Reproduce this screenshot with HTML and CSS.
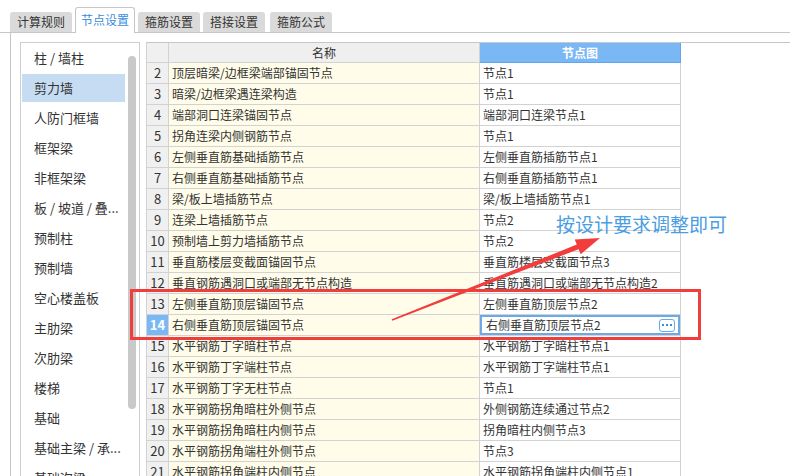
FILE: index.html
```html
<!DOCTYPE html>
<html lang="zh-CN">

  <head>
    <meta charset="UTF-8">
    <meta name="viewport" content="width=device-width, initial-scale=1.0">
    <title>节点设置</title>

    <link rel="stylesheet" href="styles.css">
  </head>

  <body>

    <div class="tabs">
      <div class="tab">计算规则</div>
      <div class="tab active">节点设置</div>
      <div class="tab">箍筋设置</div>
      <div class="tab">搭接设置</div>
      <div class="tab last">箍筋公式</div>
    </div>

    <div class="content">

      <div class="sidebar">
        <ul class="list">
          <li>柱 / 墙柱</li>
          <li class="selected">剪力墙</li>
          <li>人防门框墙</li>
          <li>框架梁</li>
          <li>非框架梁</li>
          <li>板 / 坡道 / 叠...</li>
          <li>预制柱</li>
          <li>预制墙</li>
          <li>空心楼盖板</li>
          <li>主肋梁</li>
          <li>次肋梁</li>
          <li>楼梯</li>
          <li>基础</li>
          <li>基础主梁 / 承...</li>
          <li>基础次梁</li>
        </ul>
        <div class="thumb"></div>
      </div>

      <div class="grid">
        <table>
          <thead>
            <tr>
              <th class="num"></th>
              <th class="name">名称</th>
              <th class="node">节点图</th>
            </tr>
          </thead>
          <tbody>
            <tr><td class="num">2</td><td class="name">顶层暗梁/边框梁端部锚固节点</td><td class="node">节点1</td></tr>
            <tr><td class="num">3</td><td class="name">暗梁/边框梁遇连梁构造</td><td class="node">节点1</td></tr>
            <tr><td class="num">4</td><td class="name">端部洞口连梁锚固节点</td><td class="node">端部洞口连梁节点1</td></tr>
            <tr><td class="num">5</td><td class="name">拐角连梁内侧钢筋节点</td><td class="node">节点1</td></tr>
            <tr><td class="num">6</td><td class="name">左侧垂直筋基础插筋节点</td><td class="node">左侧垂直筋插筋节点1</td></tr>
            <tr><td class="num">7</td><td class="name">右侧垂直筋基础插筋节点</td><td class="node">右侧垂直筋插筋节点1</td></tr>
            <tr><td class="num">8</td><td class="name">梁/板上墙插筋节点</td><td class="node">梁/板上墙插筋节点1</td></tr>
            <tr><td class="num">9</td><td class="name">连梁上墙插筋节点</td><td class="node">节点2</td></tr>
            <tr><td class="num">10</td><td class="name">预制墙上剪力墙插筋节点</td><td class="node">节点2</td></tr>
            <tr><td class="num">11</td><td class="name">垂直筋楼层变截面锚固节点</td><td class="node">垂直筋楼层变截面节点3</td></tr>
            <tr><td class="num">12</td><td class="name">垂直钢筋遇洞口或端部无节点构造</td><td class="node">垂直筋遇洞口或端部无节点构造2</td></tr>
            <tr><td class="num">13</td><td class="name">左侧垂直筋顶层锚固节点</td><td class="node">左侧垂直筋顶层节点2</td></tr>
            <tr class="current">
              <td class="num">14</td>
              <td class="name">右侧垂直筋顶层锚固节点</td>
              <td class="node">
                <div class="editor">
                  <span>右侧垂直筋顶层节点2</span>
                  <span class="more"><i></i><i></i><i></i></span>
                </div>
              </td>
            </tr>
            <tr><td class="num">15</td><td class="name">水平钢筋丁字暗柱节点</td><td class="node">水平钢筋丁字暗柱节点1</td></tr>
            <tr><td class="num">16</td><td class="name">水平钢筋丁字端柱节点</td><td class="node">水平钢筋丁字端柱节点1</td></tr>
            <tr><td class="num">17</td><td class="name">水平钢筋丁字无柱节点</td><td class="node">节点1</td></tr>
            <tr><td class="num">18</td><td class="name">水平钢筋拐角暗柱外侧节点</td><td class="node">外侧钢筋连续通过节点2</td></tr>
            <tr><td class="num">19</td><td class="name">水平钢筋拐角暗柱内侧节点</td><td class="node">拐角暗柱内侧节点3</td></tr>
            <tr><td class="num">20</td><td class="name">水平钢筋拐角端柱外侧节点</td><td class="node">节点3</td></tr>
            <tr><td class="num">21</td><td class="name">水平钢筋拐角端柱内侧节点</td><td class="node">水平钢筋拐角端柱内侧节点1</td></tr>
          </tbody>
        </table>
      </div>

    </div>

    <!-- annotation drawn over the screenshot -->
    <svg class="markup" width="790" height="476" viewBox="0 0 790 476">
      <rect x="131.5" y="290.5" width="568" height="48" fill="none" stroke="#f23d3d" stroke-width="3" />
      <polygon fill="#f23d3d"
        points="391.7,319.3 576.8,244.6 574.7,239.5 600,238 580.7,254.3 578.6,249.2 392.3,320.7" />
    </svg>
    <div class="note">按设计要求调整即可</div>

  </body>

</html>
```

FILE: styles.css
```css
* {
  margin: 0;
  padding: 0;
  box-sizing: border-box;
}

body {
  width: 790px;
  height: 476px;
  overflow: hidden;
  position: relative;
  background: #fff;
  color: #333;
  font-family: "Noto Sans CJK SC", "Noto Sans", sans-serif;
}

.tabs {
  display: flex;
  align-items: flex-end;
  gap: 3px;
  height: 33px;
  padding-left: 10px;
  border-bottom: 1px solid #c6c6c6;

  & .tab {
    height: 20px;
    line-height: 20px;
    padding: 0 7px;
    font-size: 12px;
    background: #dadada;
    border-radius: 3px 3px 0 0;
  }

  & .tab.active {
    height: 26px;
    line-height: 24px;
    padding: 0 5px;
    margin-bottom: -1px;
    background: #fff;
    color: #3a8ee0;
    border: 1px solid #c6c6c6;
    border-bottom: none;
  }

  & .tab.last {
    margin-left: 2px;
  }
}

.content {
  display: flex;
  gap: 6px;
  height: 443px;
  margin-left: 10px;
  padding: 9px 0 0 9px;
  border-left: 1px solid #c6c6c6;
  overflow: hidden;
}

.sidebar {
  display: flex;
  flex-shrink: 0;
  width: 120px;
  height: 460px;
  border: 1px solid #cfcfcf;

  & .list {
    list-style: none;
    display: flex;
    flex-direction: column;
    gap: 2px;
    width: 103px;
    margin-left: 1px;
    padding-top: 1px;
  }

  & li {
    height: 28px;
    line-height: 28px;
    padding-left: 12px;
    font-size: 13px;
    white-space: nowrap;
  }

  & li.selected {
    background: #c5dcf2;
  }

  & .thumb {
    width: 8px;
    height: 353px;
    margin: 13px 0 0 3px;
    border-radius: 4px;
    background: #c9c9c9;
  }
}

.grid {
  flex: 1;
  border-top: 1px solid #c6c6c6;
  border-left: 1px solid #d2d2d2;

  & table {
    border-collapse: separate;
    border-spacing: 0;
    font-size: 12px;
  }

  & th,
  & td {
    border-right: 1px solid #d2d2d2;
    border-bottom: 1px solid #d2d2d2;
    padding: 0;
    white-space: nowrap;
    overflow: hidden;
  }

  & th {
    height: 20px;
    line-height: 19px;
    font-weight: normal;
    background: #efefef;
  }

  & th.node {
    background: #7ab8f5;
    border-color: #62a6ea;
    color: #fff;
    font-weight: bold;
  }

  & td {
    height: 21px;
    line-height: 20px;
  }

  & .num {
    width: 22px;
    min-width: 22px;
    text-align: center;
    background: #f0f0f0;
  }

  & td.num {
    font-size: 13px;
  }

  & .name {
    width: 311px;
    min-width: 311px;
  }

  & td.name {
    padding-left: 3px;
    background: #fffde9;
  }

  & .node {
    width: 201px;
    min-width: 201px;
  }

  & td.node {
    padding-left: 3px;
    background: #fff;
  }

  & tr.current td.num {
    background: #7ab8f5;
    color: #fff;
    font-weight: bold;
  }

  & tr.current td.node {
    padding: 0;
  }

  & .editor {
    display: flex;
    align-items: center;
    justify-content: space-between;
    height: 20px;
    padding: 0 3px 0 4px;
    border: 2px solid #6aaae8;
    line-height: 16px;
  }

  & .more {
    display: flex;
    align-items: center;
    justify-content: center;
    gap: 2px;
    width: 16px;
    height: 13px;
    border: 1px solid #6aaae8;
    border-radius: 3px;
    background: #fff;

    & i {
      width: 2px;
      height: 2px;
      background: #3a8ee0;
    }
  }
}

.markup {
  position: absolute;
  top: 0;
  left: 0;
  pointer-events: none;
}

.note {
  position: absolute;
  left: 556px;
  top: 211px;
  font-size: 19px;
  line-height: 26px;
  color: #4a9de2;
  white-space: nowrap;
}
```
